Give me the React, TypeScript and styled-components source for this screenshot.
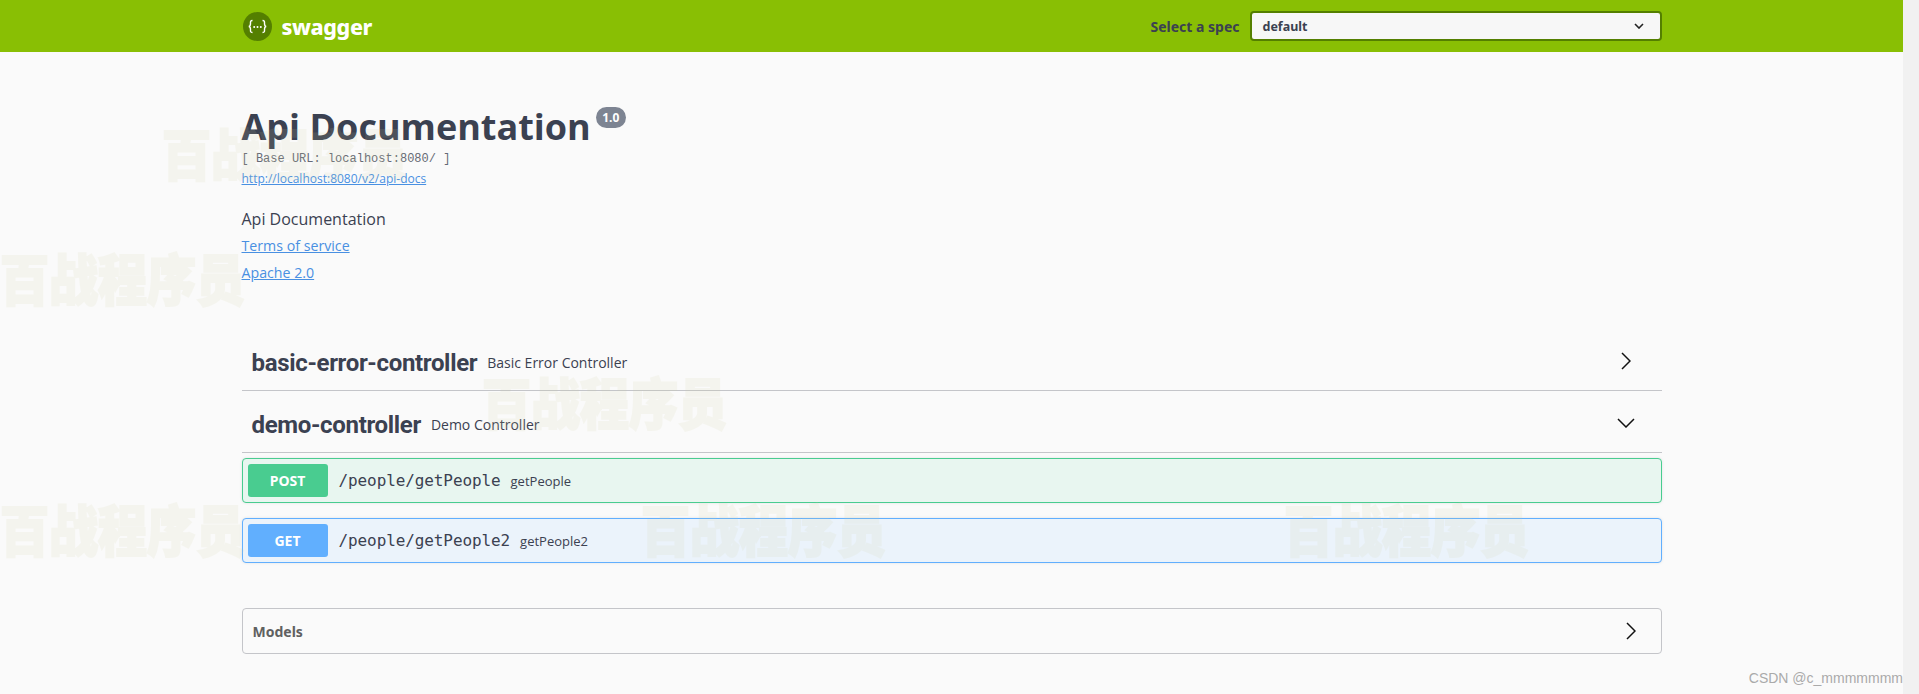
import React from 'react'
import styled, { createGlobalStyle } from 'styled-components'

const GlobalStyle = createGlobalStyle`
  html, body { margin: 0; padding: 0; background: #fafafa; overflow: hidden; }
  * { box-sizing: border-box; }
`

const Screen = styled.div`
  display: flex;
  height: 694px;
  position: relative;
  overflow: hidden;
  font-family: "Open Sans", sans-serif;
  color: #3b4151;
`
const Page = styled.div`
  flex: 1;
  min-width: 0;
  background: #fafafa;
`
const ScrollTrack = styled.div`
  width: 16px;
  background: #f1f1f1;
`
const Wrapper = styled.div`
  max-width: 1460px;
  margin: 0 auto;
  padding: 0 20px;
`
const Topbar = styled.div`
  background: #89bf04;
  height: 52px;
`
const TopbarRow = styled(Wrapper)`
  display: flex;
  align-items: center;
  height: 52px;
`
const Brand = styled.a`
  display: flex;
  align-items: center;
  flex: 1;
  gap: 10px;
  padding-left: 1px;
  color: #fff;
  font-family: "Noto Sans", sans-serif;
  font-weight: 800;
  font-size: 21.5px;
  letter-spacing: -0.4px;
`
const SpecLabel = styled.label`
  font-family: "Noto Sans", sans-serif;
  font-size: 14px;
  font-weight: 700;
  color: #3b4151;
  margin-right: 10px;
`
const SpecSelect = styled.div`
  width: 412px;
  height: 30px;
  border: 2px solid #547f00;
  border-radius: 4px;
  background: #f7f7f7;
  display: flex;
  align-items: center;
  justify-content: space-between;
  padding: 0 16px 0 11px;
  font-family: "Noto Sans", sans-serif;
  font-size: 12.5px;
  font-weight: 700;
`
const Info = styled.div`
  padding-top: 53px;
`
const TitleRow = styled.div`
  display: flex;
  align-items: flex-start;
`
const Title = styled.h2`
  margin: 0;
  font-size: 36px;
  line-height: 44px;
  font-weight: 700;
`
const Version = styled.span`
  margin: 2px 0 0 5px;
  width: 30px;
  height: 21px;
  border-radius: 11px;
  background: #7d8492;
  color: #fff;
  font-size: 12px;
  font-weight: 700;
  display: flex;
  align-items: center;
  justify-content: center;
`
const BaseUrl = styled.div`
  margin-top: 2px;
  font-family: "Liberation Mono", monospace;
  font-size: 12px;
  line-height: 16px;
  color: #666a75;
`
const DocsLink = styled.a`
  display: block;
  margin-top: 4px;
  font-size: 12px;
  line-height: 16px;
  color: #4990e2;
  text-decoration: underline;
`
const Description = styled.p`
  margin: 21px 0 0;
  font-size: 16px;
  line-height: 22px;
`
const InfoLink = styled.a`
  display: block;
  margin-top: 5px;
  font-size: 14.2px;
  line-height: 22px;
  color: #4990e2;
  text-decoration: underline;
`
const Groups = styled.div`
  margin-top: 45px;
`
const GroupHeader = styled.div`
  height: 62px;
  display: flex;
  align-items: center;
  padding: 6px 0 0 10px;
  border-bottom: 1px solid #c4c5c9;
`
const GroupName = styled.h4`
  margin: 0;
  font-family: "Roboto", sans-serif;
  font-size: 24px;
  font-weight: 700;
  letter-spacing: -0.33px;
`
const GroupDesc = styled.small`
  flex: 1;
  margin-left: 10px;
  font-size: 14px;
`
const ChevronSlot = styled.span<{ $right: number }>`
  display: flex;
  margin: -4px ${(p) => p.$right}px 0 0;
`
const Operation = styled.div<{ $border: string; $bg: string; $gap: number }>`
  height: 45px;
  margin-top: ${(p) => p.$gap}px;
  padding: 5px;
  display: flex;
  align-items: center;
  border: 1px solid ${(p) => p.$border};
  border-radius: 4px;
  background: ${(p) => p.$bg};
  box-shadow: 0 0 3px rgba(0, 0, 0, 0.1);
`
const Method = styled.span<{ $color: string }>`
  width: 80px;
  height: 33px;
  border-radius: 3px;
  background: ${(p) => p.$color};
  color: #fff;
  font-family: "Noto Sans", sans-serif;
  font-size: 14px;
  font-weight: 700;
  display: flex;
  align-items: center;
  justify-content: center;
`
const OpPath = styled.span`
  margin-left: 11px;
  font-family: "DejaVu Sans Mono", monospace;
  font-size: 16px;
  letter-spacing: -0.1px;
`
const OpSummary = styled.span`
  margin-left: 10px;
  font-size: 13px;
`
const Models = styled.div`
  margin-top: 45px;
  height: 46px;
  border: 1px solid #c4c5c9;
  border-radius: 4px;
  display: flex;
  align-items: center;
  justify-content: space-between;
  padding: 0 25px 0 10px;
`
const ModelsTitle = styled.h4`
  margin: 0;
  font-family: "Noto Sans", sans-serif;
  font-size: 14px;
  font-weight: 700;
  color: #606060;
`
const Mark = styled.div<{ $x: number; $y: number }>`
  position: absolute;
  left: ${(p) => p.$x}px;
  top: ${(p) => p.$y}px;
  font-family: "Noto Sans CJK SC", sans-serif;
  font-size: 49px;
  line-height: 54px;
  font-weight: 900;
  color: #d0d09e;
  -webkit-text-stroke: 2px #d0d09e;
  opacity: 0.12;
  transform: scaleY(1.12);
  white-space: nowrap;
  pointer-events: none;
`
const Credit = styled.div`
  position: absolute;
  right: 16px;
  bottom: 8px;
  font-family: "Liberation Sans", sans-serif;
  font-size: 14px;
  line-height: 16px;
  color: #aaa;
`

const marks = [
  { x: 162, y: 124 },
  { x: 0, y: 249 },
  { x: 482, y: 373 },
  { x: 0, y: 500 },
  { x: 641, y: 500 },
  { x: 1284, y: 500 },
]

const Chevron = ({ dir }: { dir: 'right' | 'down' }) =>
  dir === 'right' ? (
    <svg width="10" height="18" viewBox="0 0 10 18" fill="none" stroke="#111" strokeWidth="1.5">
      <path d="M1 1l8 8-8 8" />
    </svg>
  ) : (
    <svg width="18" height="10" viewBox="0 0 18 10" fill="none" stroke="#111" strokeWidth="1.5">
      <path d="M1 1l8 8 8-8" />
    </svg>
  )

const Logo = () => (
  <svg width="29" height="29" viewBox="0 0 29 29">
    <circle cx="14.5" cy="14.5" r="14.5" fill="#547f00" />
    <g fill="none" stroke="#fff" strokeWidth="1.4">
      <path d="M9.5 8.5c-2.4 0-2 1.6-2 3s-.2 3-1.8 3c1.6 0 1.8 1.600 1.800 3s-.4 3 2 3" />
      <path d="M19.500 8.500c2.400 0 2 1.600 2 3s.2 3 1.800 3c-1.600 0-1.800 1.600-1.800 3s.4 3-2 3" />
    </g>
    <g fill="#fff">
      <circle cx="11.200" cy="15" r="1" />
      <circle cx="14.500" cy="15" r="1" />
      <circle cx="17.800" cy="15" r="1" />
    </g>
  </svg>
)

export default function App() {
  return (
    <Screen>
      <GlobalStyle />
      <Page>
        <Topbar>
          <TopbarRow>
            <Brand>
              <Logo />
              swagger
            </Brand>
            <SpecLabel>Select a spec</SpecLabel>
            <SpecSelect>
              default
              <svg width="10" height="6" viewBox="0 0 10 6" fill="none" stroke="#222" strokeWidth="1.600">
                <path d="M1 1l4 4 4-4" />
              </svg>
            </SpecSelect>
          </TopbarRow>
        </Topbar>
        <Wrapper>
          <Info>
            <TitleRow>
              <Title>Api Documentation</Title>
              <Version>1.0</Version>
            </TitleRow>
            <BaseUrl>[ Base URL: localhost:8080/ ]</BaseUrl>
            <DocsLink>http://localhost:8080/v2/api-docs</DocsLink>
            <Description>Api Documentation</Description>
            <InfoLink>Terms of service</InfoLink>
            <InfoLink>Apache 2.0</InfoLink>
          </Info>
          <Groups>
            <GroupHeader>
              <GroupName>basic-error-controller</GroupName>
              <GroupDesc>Basic Error Controller</GroupDesc>
              <ChevronSlot $right={31}><Chevron dir="right" /></ChevronSlot>
            </GroupHeader>
            <GroupHeader>
              <GroupName>demo-controller</GroupName>
              <GroupDesc>Demo Controller</GroupDesc>
              <ChevronSlot $right={27}><Chevron dir="down" /></ChevronSlot>
            </GroupHeader>
            <Operation $border="#49cc90" $bg="#e8f6f0" $gap={5}>
              <Method $color="#49cc90">POST</Method>
              <OpPath>/people/getPeople</OpPath>
              <OpSummary>getPeople</OpSummary>
            </Operation>
            <Operation $border="#61affe" $bg="#ebf3fb" $gap={15}>
              <Method $color="#61affe">GET</Method>
              <OpPath>/people/getPeople2</OpPath>
              <OpSummary>getPeople2</OpSummary>
            </Operation>
          </Groups>
          <Models>
            <ModelsTitle>Models</ModelsTitle>
            <Chevron dir="right" />
          </Models>
        </Wrapper>
      </Page>
      <ScrollTrack />
      {marks.map((m) => (
        <Mark key={`${m.x}-${m.y}`} $x={m.x} $y={m.y}>百战程序员</Mark>
      ))}
      <Credit>CSDN @c_mmmmmmm</Credit>
    </Screen>
  )
}
